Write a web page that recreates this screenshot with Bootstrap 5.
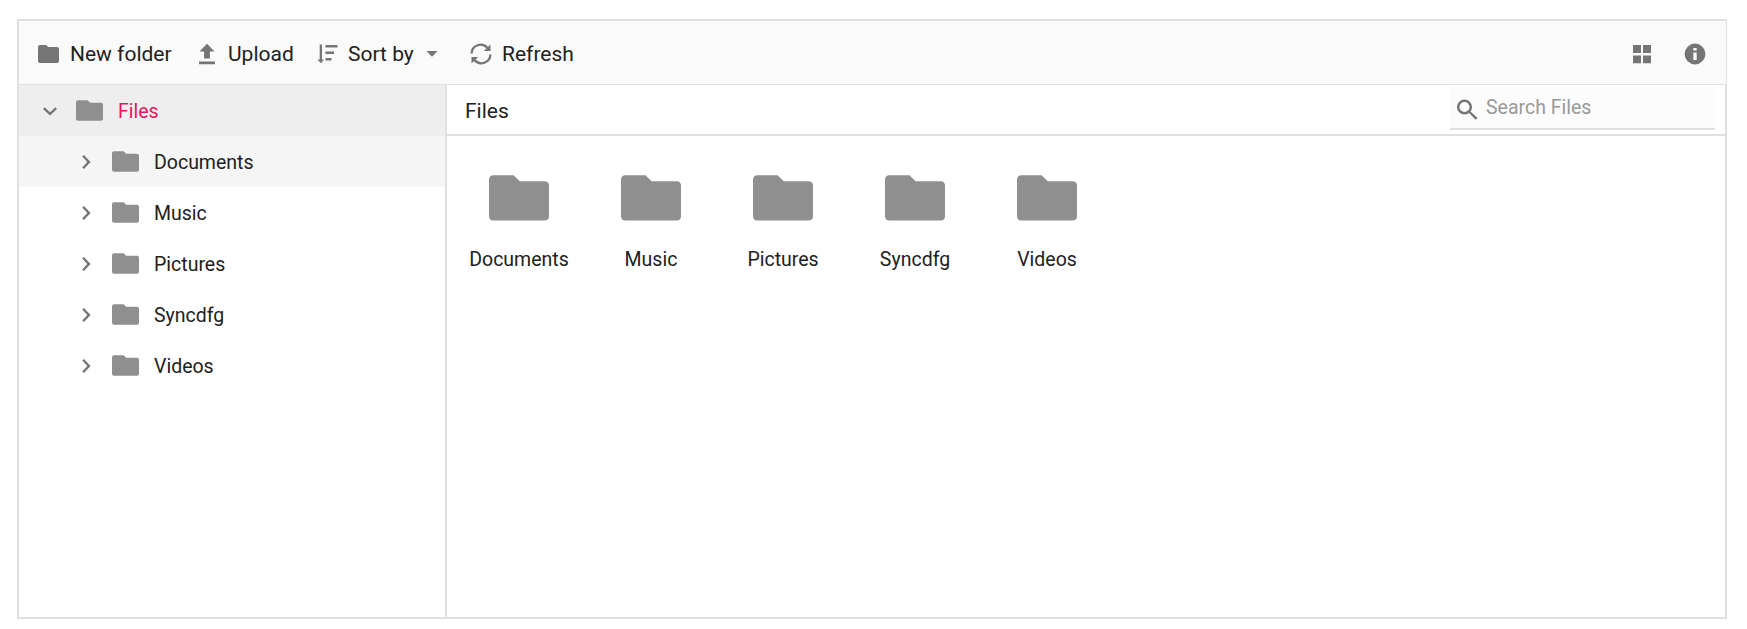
<!DOCTYPE html>
<html lang="en">
<head>
<meta charset="utf-8">
<meta name="viewport" content="width=device-width, initial-scale=1">
<title>File Manager</title>
<link href="https://cdn.jsdelivr.net/npm/bootstrap@5.3.0/dist/css/bootstrap.min.css" rel="stylesheet">
<style>
body{font-family:Roboto,"Liberation Sans",sans-serif;font-size:19.5px;line-height:24px;color:#212121;background:#fff}
.fm{margin:19px 20px 0 17px;height:600px;border:2px solid #e0e0e0}
.fm-toolbar{height:64px;background:#fafafa;border-bottom:1px solid #e0e0e0;margin-right:-1px;padding:2px 0 0 17px;font-size:21px}
.tool{border:0;background:none;padding:0;color:#212121;height:24px;white-space:nowrap}
.tool svg,.search svg,.toggle{fill:#757575;flex:none}
.tool span{width:var(--w)}
.side{width:428px;border-right:2px solid #e0e0e0;flex:none}
.node{height:51px}
.node span{padding-top:2px}
.node.child{padding-left:36px}
.node .toggle{margin-left:19.5px;width:22px;height:22px}
.node .pic{margin:0 15px 0 15.5px;width:27px;height:21px}
.node.active-node{background:#eee;color:#e3165b}
.node.hover-node{background:#f5f5f5}
.pic{fill:#8f8f8f;display:block;flex:none}
.crumbs{height:51px;border-bottom:2px solid #e0e0e0;padding:0 10px 0 18px}
.crumb-text{font-size:21px;padding-top:2px}
.search{width:265px;height:43px;margin-top:2px;background:#fcfcfc;border-bottom:2px solid #e0e0e0;padding-left:6px}
.search input{border:0;background:none;outline:0;padding:0;width:200px;height:24px;margin:0 0 0 8px}
.search input::placeholder{color:#999;opacity:1}
.tiles{padding:39px 0 0 6px}
.tile{width:132px}
.tile .pic{width:60px;height:46px;margin-bottom:27px}
</style>
</head>
<body>
<svg class="d-none">
  <symbol id="folder-lg" viewBox="0 0 60 46"><path d="M4.500.3H24.500L30.800 6.300H55.500Q60 6.300 60 10.800V41Q60 45.500 55.500 45.500H4.500Q0 45.500 0 41V4.800Q0 .3 4.500.3Z"/></symbol>
  <symbol id="folder-sm" viewBox="0 0 27 21"><path d="M2 .3H11.500L14.200 2.700H25Q27 2.700 27 4.700V18.700Q27 20.700 25 20.700H2Q0 20.700 0 18.700V2.300Q0 .3 2 .3Z"/></symbol>
  <symbol id="chev" viewBox="0 0 22 22"><path d="M7.200 5.600 8.900 4 15.600 11 8.900 18 7.200 16.400 12.300 11Z"/></symbol>
</svg>
<main class="fm d-flex flex-column">
  <header class="fm-toolbar d-flex align-items-center flex-shrink-0">
    <button class="tool d-flex align-items-center" style="--w:129px">
      <svg width="25" height="20" viewBox="0 0 25 20" style="margin-right:9px"><path d="M4.200 1H10L12.200 3H21Q23 3 23 5V17Q23 19 21 19H4Q2 19 2 17V3Q2 1 4.200 1Z"/></svg><span class="text-start">New folder</span></button>
    <button class="tool d-flex align-items-center" style="--w:89px">
      <svg width="16" height="22" viewBox="0 0 16 22" style="margin-right:13px"><path d="M8 .8 15.500 8.500H10.900V15.500H5.100V8.500H.5ZM0 18.500H16V21.200H0Z"/></svg><span class="text-start">Upload</span></button>
    <button class="tool d-flex align-items-center" style="--w:78px">
      <svg width="21" height="22" viewBox="0 0 21 22" style="margin-right:10px"><path d="M2.700 1.500H5V16.500H7L3.900 20.200.4 16.500H2.700ZM8.500 2H20.500V4.500H8.500ZM8.500 8.500H17V11H8.500ZM8.500 15H14.500V17.500H8.500Z"/></svg><span class="text-start">Sort by</span>
      <svg width="12" height="8" viewBox="0 0 12 8"><path d="M.5 1H11.500L6 6.800Z"/></svg></button>
    <button class="tool d-flex align-items-center" style="--w:90px">
      <svg width="22" height="22" viewBox="0 0 22 22" style="margin:0 10px 0 32px"><path d="M1.600 10.500A9 9 0 0 1 17.500 5M20.400 11.500A9 9 0 0 1 4.500 17" fill="none" stroke="#757575" stroke-width="2.300"/><path d="M20.500 1.500V8H13.800ZM1.500 20.500V14H8.200Z"/></svg><span class="text-start">Refresh</span></button>
    <button class="tool d-flex align-items-center ms-auto" aria-label="View">
      <svg width="20" height="20" viewBox="0 0 20 20"><path d="M1 1H9V9H1ZM11 1H19V9H11ZM1 11.500H9V19.300H1ZM11 11.500H19V19.300H11Z"/></svg></button>
    <button class="tool d-flex align-items-center" aria-label="Details" style="margin:0 20px 0 32px">
      <svg width="22" height="22" viewBox="0 0 22 22"><path fill-rule="evenodd" d="M11 .6A10.400 10.400 0 1 1 11 21.400 10.400 10.400 0 0 1 11 .6ZM9.300 5V7.600H12.700V5ZM9.300 9.500V17H12.700V9.500Z"/></svg></button>
  </header>
  <div class="d-flex flex-grow-1">
    <nav class="side">
      <div class="node active-node d-flex align-items-center"><svg class="toggle" style="transform:rotate(90deg)"><use href="#chev"/></svg><svg class="pic"><use href="#folder-sm"/></svg><span>Files</span></div>
      <div class="node child hover-node d-flex align-items-center"><svg class="toggle"><use href="#chev"/></svg><svg class="pic"><use href="#folder-sm"/></svg><span>Documents</span></div>
      <div class="node child d-flex align-items-center"><svg class="toggle"><use href="#chev"/></svg><svg class="pic"><use href="#folder-sm"/></svg><span>Music</span></div>
      <div class="node child d-flex align-items-center"><svg class="toggle"><use href="#chev"/></svg><svg class="pic"><use href="#folder-sm"/></svg><span>Pictures</span></div>
      <div class="node child d-flex align-items-center"><svg class="toggle"><use href="#chev"/></svg><svg class="pic"><use href="#folder-sm"/></svg><span>Syncdfg</span></div>
      <div class="node child d-flex align-items-center"><svg class="toggle"><use href="#chev"/></svg><svg class="pic"><use href="#folder-sm"/></svg><span>Videos</span></div>
    </nav>
    <section class="flex-grow-1">
      <div class="crumbs d-flex justify-content-between">
        <div class="crumb-text align-self-center">Files</div>
        <div class="search d-flex align-items-center">
          <svg width="22" height="22" viewBox="0 0 22 22" class="mt-1"><circle cx="8.500" cy="8" r="6.300" fill="none" stroke="#757575" stroke-width="2.500"/><path d="M12.500 13.500 14 12 21.500 19 19.700 20.800Z"/></svg>
          <input type="text" placeholder="Search Files" aria-label="Search Files">
        </div>
      </div>
      <div class="tiles d-flex">
        <div class="tile d-flex flex-column align-items-center"><svg class="pic"><use href="#folder-lg"/></svg>Documents</div>
        <div class="tile d-flex flex-column align-items-center"><svg class="pic"><use href="#folder-lg"/></svg>Music</div>
        <div class="tile d-flex flex-column align-items-center"><svg class="pic"><use href="#folder-lg"/></svg>Pictures</div>
        <div class="tile d-flex flex-column align-items-center"><svg class="pic"><use href="#folder-lg"/></svg>Syncdfg</div>
        <div class="tile d-flex flex-column align-items-center"><svg class="pic"><use href="#folder-lg"/></svg>Videos</div>
      </div>
    </section>
  </div>
</main>
<script src="https://cdn.jsdelivr.net/npm/bootstrap@5.3.0/dist/js/bootstrap.bundle.min.js"></script>
</body>
</html>
